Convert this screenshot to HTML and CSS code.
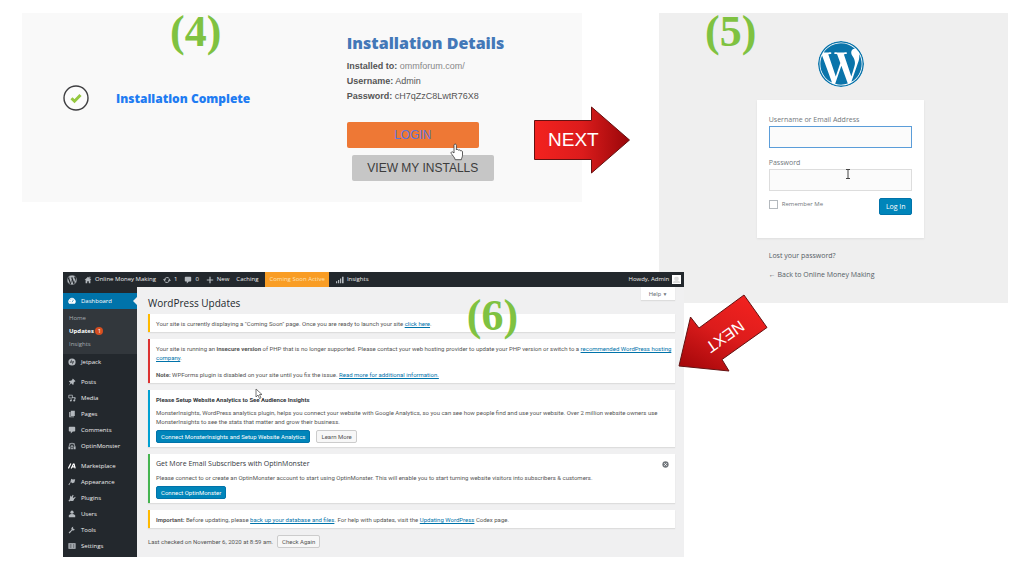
FILE: index.html
```html
<!DOCTYPE html>
<html lang="en">
<head>
<meta charset="utf-8">
<title>WordPress installation steps</title>
<link rel="stylesheet" href="styles.css">
</head>
<body>
<svg class="defs" width="0" height="0" aria-hidden="true">
  <symbol id="wp" viewBox="0 0 24 24">
    <circle cx="12" cy="12" r="11.6" fill="none" stroke="currentColor" stroke-width=".8"/>
    <path fill="currentColor" d="M21.469 6.825c.84 1.537 1.318 3.3 1.318 5.175 0 3.979-2.156 7.456-5.363 9.325l3.295-9.527c.615-1.54.82-2.771.82-3.864 0-.405-.026-.78-.07-1.11m-7.981.105c.647-.03 1.232-.105 1.232-.105.582-.075.514-.93-.067-.899 0 0-1.755.135-2.88.135-1.064 0-2.85-.15-2.85-.15-.585-.03-.661.855-.075.885 0 0 .54.061 1.125.09l1.68 4.605-2.37 7.08L5.354 6.9c.649-.03 1.234-.1 1.234-.1.585-.075.516-.93-.065-.896 0 0-1.746.138-2.874.138-.2 0-.438-.008-.69-.015C4.911 3.15 8.235 1.215 12 1.215c2.809 0 5.365 1.072 7.286 2.833-.046-.003-.091-.009-.141-.009-1.06 0-1.812.923-1.812 1.914 0 .89.513 1.643 1.06 2.531.411.72.89 1.643.89 2.977 0 .915-.354 1.994-.821 3.479l-1.075 3.585-3.9-11.61zM12 22.784c-1.059 0-2.081-.153-3.048-.437l3.237-9.406 3.315 9.087c.024.053.05.101.078.149-1.12.393-2.325.609-3.582.609M1.211 12c0-1.564.336-3.05.935-4.39L7.29 21.709C3.694 19.96 1.212 16.271 1.211 12"/>
  </symbol>
  <symbol id="comment" viewBox="0 0 20 20"><path fill="currentColor" d="M4 2h12a2 2 0 0 1 2 2v8a2 2 0 0 1-2 2h-4l-5 5v-5H4a2 2 0 0 1-2-2V4a2 2 0 0 1 2-2z"/></symbol>
</svg>

<main class="slide">
  <div class="top">
    <section class="install">
      <span class="step step-4">(4)</span>
      <div class="done">
        <svg class="tick" viewBox="0 0 26 26"><circle cx="13" cy="13" r="12" fill="#fcfcfc" stroke="#3f3f42" stroke-width="1.4"/><path d="M8.500 13.200l3 3 6-6.200" fill="none" stroke="#95c840" stroke-width="3"/></svg>
        <strong class="done-text">Installation Complete</strong>
      </div>
      <div class="details">
        <h2 class="details-title">Installation Details</h2>
        <p class="detail"><b>Installed to:</b> <span class="domain">ommforum.com/</span></p>
        <p class="detail"><b>Username:</b> Admin</p>
        <p class="detail"><b>Password:</b> cH7qZzC8LwtR76X8</p>
        <div class="actions">
          <button class="big login-btn" type="button">LOGIN
            <svg class="hand" viewBox="0 0 14 18"><path d="M4 10V2.4C4 .6 6.4.6 6.4 2.4V7c.3-.9 2-.8 2.2.3.5-.7 1.9-.4 2 .6.6-.5 1.9-.2 1.9 1.1v3.2c0 2-1 2.8-1.2 4.5H5.2C4.8 14.500 2.500 12.500 1.200 10.400.500 9.100 2.200 8.300 3 9.200z" fill="#fff" stroke="#333" stroke-width=".8"/></svg>
          </button>
          <button class="big view-btn" type="button">VIEW MY INSTALLS</button>
        </div>
      </div>
    </section>

    <svg class="next" viewBox="0 0 96 68">
      <defs><linearGradient id="red" x1="0" y1="0" x2="1" y2="0"><stop offset="0" stop-color="#f3221f"/><stop offset=".5" stop-color="#dc1c1c"/><stop offset="1" stop-color="#980609"/></linearGradient></defs>
      <path d="M.5 14.500H57.500V1L95.500 34 57.500 67V53.500H.5z" fill="url(#red)" stroke="#641212"/>
      <text x="14" y="40" class="next-text next-text-large">NEXT</text>
    </svg>

    <section class="login">
      <span class="step step-5">(5)</span>
      <div class="login-col">
        <svg class="logo"><use href="#wp"/></svg>
        <form class="card">
          <label class="lbl" for="user">Username or Email Address</label>
          <input class="field focused" id="user" type="text">
          <label class="lbl" for="pass">Password</label>
          <div class="field-wrap">
            <input class="field" id="pass" type="password">
            <svg class="ibeam" viewBox="0 0 6 10"><path d="M1 .5h4M1 9.500h4M3 .5v9" stroke="#444" fill="none"/></svg>
          </div>
          <div class="submit">
            <label class="remember"><input class="box" type="checkbox">Remember Me</label>
            <button class="wpbtn primary log-in" type="button">Log In</button>
          </div>
        </form>
        <a class="below" href="#">Lost your password?</a>
        <a class="below" href="#">← Back to Online Money Making</a>
      </div>
    </section>
  </div>

  <section class="admin">
    <header class="bar">
      <svg class="ic ic-wp"><use href="#wp"/></svg>
      <span class="bar-item"><svg class="ic" viewBox="0 0 20 20"><path fill="currentColor" d="M10 2l8.500 8H16v8h-4v-5H8v5H4v-8H1.500zM13 2h3v5l-3-3z"/></svg>Online Money Making</span>
      <span class="bar-item"><svg class="ic" viewBox="0 0 20 20"><g fill="none" stroke="currentColor" stroke-width="2.500"><path d="M4 9a6.500 6.500 0 0 1 12-2M16 11a6.500 6.500 0 0 1-12 2"/></g><path fill="currentColor" d="M0 8h8l-4 5zM12 12h8l-4-5z"/></svg>1</span>
      <span class="bar-item"><svg class="ic"><use href="#comment"/></svg>0</span>
      <span class="bar-item"><svg class="ic" viewBox="0 0 20 20"><path d="M10 2v16M2 10h16" stroke="currentColor" stroke-width="3"/></svg>New</span>
      <span class="bar-item">Caching</span>
      <span class="soon">Coming Soon Active</span>
      <span class="bar-item"><svg class="ic" viewBox="0 0 20 20"><path fill="currentColor" d="M0 13h3v5H0zM5 10h3v8H5zM10 6h3v12h-3zM15 2h4v16h-4z"/></svg>Insights</span>
      <span class="howdy">Howdy, Admin <svg class="avatar" viewBox="0 0 10 10"><path fill="#fff" d="M0 0h10v10H0z"/><path fill="#ddd" d="M5 2a2 2 0 0 1 1 4q3 0 3 3H1q0-3 3-3a2 2 0 0 1 1-4z"/></svg></span>
    </header>

    <div class="work">
      <nav class="side">
        <a class="nav current" href="#"><svg class="ic" viewBox="0 0 20 20"><path fill="currentColor" d="M3 17a9 9 0 1 1 14 0z"/><path d="M10 13l4-6M4 11h2M6 6l1 1M10 4v2" stroke="#0073aa" stroke-width="1.600"/></svg>Dashboard</a>
        <div class="sub">
          <a class="sub-item" href="#">Home</a>
          <a class="sub-item on" href="#">Updates <span class="count">1</span></a>
          <a class="sub-item" href="#">Insights</a>
        </div>
        <a class="nav" href="#"><svg class="ic" viewBox="0 0 20 20"><circle cx="10" cy="10" r="9" fill="currentColor"/><path fill="#23282d" d="M9 3v9H5zM11 17V8h4z"/></svg>Jetpack</a>
        <a class="nav group" href="#"><svg class="ic" viewBox="0 0 20 20"><path fill="currentColor" d="M12 1l7 7-2 1-3 3v4l-2 1-4-4-6 6 4-7-4-4 2-1h4l3-3z"/></svg>Posts</a>
        <a class="nav" href="#"><svg class="ic" viewBox="0 0 20 20"><path fill="none" stroke="currentColor" stroke-width="2" d="M2 3h9v7H2zM10 9h8v3M17 9v7"/><circle cx="15.500" cy="16.500" r="2.500" fill="currentColor"/><path fill="none" stroke="currentColor" stroke-width="2" d="M8 12v5"/><circle cx="7" cy="16.500" r="2.300" fill="currentColor"/></svg>Media</a>
        <a class="nav" href="#"><svg class="ic" viewBox="0 0 20 20"><path fill="currentColor" d="M7 2h10v13H7zM3 5h3v11h9v2H3z"/></svg>Pages</a>
        <a class="nav" href="#"><svg class="ic"><use href="#comment"/></svg>Comments</a>
        <a class="nav" href="#"><svg class="ic" viewBox="0 0 20 20"><path fill="none" stroke="currentColor" stroke-width="2" d="M3 10a7 7 0 0 1 14 0v2M4 3l3 3M16 3l-3 3"/><path fill="currentColor" d="M1 11h5v7H1zM14 11h5v7h-5zM7 9h6v3H7zM8 14h4v4H8z"/></svg>OptinMonster</a>
        <a class="nav group" href="#"><svg class="ic" viewBox="0 0 20 20"><path stroke="#fff" stroke-width="3" fill="none" d="M1 16l6-12M8 16l6-12M15 4l3 12M11 12h6"/></svg>Marketplace</a>
        <a class="nav" href="#"><svg class="ic" viewBox="0 0 20 20"><path fill="currentColor" d="M8 2l4 2 6-1-2 8-5 2-4-3-4 8-2-2 5-6z"/></svg>Appearance</a>
        <a class="nav" href="#"><svg class="ic" viewBox="0 0 20 20"><path fill="currentColor" d="M6 4l3 3 3-5 2 1-2 5 2 2 4-3 1 2-4 4c0 4-5 6-8 4l-4 2-2-2 3-3z"/></svg>Plugins</a>
        <a class="nav" href="#"><svg class="ic" viewBox="0 0 20 20"><circle cx="10" cy="5.500" r="4" fill="currentColor"/><path fill="currentColor" d="M2 18v-5q3-3 8-3t8 3v5z"/></svg>Users</a>
        <a class="nav" href="#"><svg class="ic" viewBox="0 0 20 20"><path fill="currentColor" d="M17 7.500a5 5 0 0 1-6.500 3.500L4 18.500 1.500 16 9 9.500A5 5 0 0 1 13.500 2L12 5l3 3z"/></svg>Tools</a>
        <a class="nav" href="#"><svg class="ic" viewBox="0 0 20 20"><path fill="currentColor" d="M1 3h18v14H1z"/><path stroke="#23282d" stroke-width="1.500" d="M4 7h5M4 10h5M4 13h5M12 7h4M12 10h4M12 13h4"/></svg>Settings</a>
      </nav>

      <div class="content">
        <div class="head">
          <h1 class="title">WordPress Updates</h1>
          <button class="help" type="button">Help <span class="caret">▼</span></button>
        </div>
        <div class="notice yellow"><p>Your site is currently displaying a "Coming Soon" page. Once you are ready to launch your site <a href="#">click here</a>.</p></div>
        <div class="notice red">
          <p>Your site is running an <b>insecure version</b> of PHP that is no longer supported. Please contact your web hosting provider to update your PHP version or switch to a <a href="#">recommended WordPress hosting company</a>.</p>
          <p><b>Note:</b> WPForms plugin is disabled on your site until you fix the issue. <a href="#">Read more for additional information.</a></p>
        </div>
        <div class="notice blue">
          <h3 class="small-head">Please Setup Website Analytics to See Audience Insights</h3>
          <p>MonsterInsights, WordPress analytics plugin, helps you connect your website with Google Analytics, so you can see how people find and use your website. Over 2 million website owners use MonsterInsights to see the stats that matter and grow their business.</p>
          <div class="btns"><button class="wpbtn primary" type="button">Connect MonsterInsights and Setup Website Analytics</button><button class="wpbtn" type="button">Learn More</button></div>
          <svg class="pointer" viewBox="0 0 8 12"><path d="M1 1v8l2-2 1.500 3.500 1.500-.7L4.500 6.500H7z" fill="#fff" stroke="#555" stroke-width=".8"/></svg>
        </div>
        <div class="notice green">
          <div class="row"><h2 class="mid-head">Get More Email Subscribers with OptinMonster</h2>
          <button class="close" type="button" aria-label="Dismiss"><svg class="close-ic" viewBox="0 0 20 20"><circle cx="10" cy="10" r="9" fill="#72777c"/><path d="M6.500 6.500l7 7M13.500 6.500l-7 7" stroke="#fff" stroke-width="2.500"/></svg></button></div>
          <p>Please connect to or create an OptinMonster account to start using OptinMonster. This will enable you to start turning website visitors into subscribers &amp; customers.</p>
          <div class="btns"><button class="wpbtn primary" type="button">Connect OptinMonster</button></div>
        </div>
        <div class="notice yellow"><p><b>Important:</b> Before updating, please <a href="#">back up your database and files</a>. For help with updates, visit the <a href="#">Updating WordPress</a> Codex page.</p></div>
        <div class="checked"><span>Last checked on November 6, 2020 at 8:59 am.</span><button class="wpbtn" type="button">Check Again</button></div>
      </div>
    </div>
    <span class="step step-6">(6)</span>
    <svg class="next-back" viewBox="0 0 90 78">
      <defs><linearGradient id="red2" x1=".8" y1="0" x2=".2" y2="1"><stop offset="0" stop-color="#f3221f"/><stop offset=".5" stop-color="#dc1c1c"/><stop offset="1" stop-color="#a8080b"/></linearGradient></defs>
      <path d="M66 1L89 33.500 44 65.500 51 77 1 72 12.500 23 21 34z" fill="url(#red2)" stroke="#641212"/>
      <text class="next-text" text-anchor="middle" transform="translate(44 38) rotate(145)">NEXT</text>
    </svg>
  </section>
</main>
</body>
</html>
```
FILE: styles.css
```css
* { box-sizing: border-box; }
body { margin: 0; background: #fff; font-family: "Open Sans", "Noto Sans", sans-serif; color: #444; }
h1, h2, h3, p { margin: 0; }
button, input { font-family: inherit; margin: 0; }
button { padding: 0; border: 0; }
.defs { position: absolute; }

.slide { padding: 13px 16px 19px 22px; overflow: hidden; }
.top { display: grid; grid-template-columns: 560fr 77px 349fr; align-items: start; }
.step { position: absolute; z-index: 3; font: bold 44px/44px "Liberation Serif", serif; color: #7fc241; }
.step-4 { left: 148px; top: -3px; }
.step-5 { left: 46px; top: -3px; }
.step-6 { left: 65%; top: 22px; }

/* Step 4: installer result */
.install { position: relative; display: grid; grid-template-columns: 58% 1fr; min-height: 189px; padding-top: 20px; background: #f9f9f9; }
.done { display: flex; align-items: center; gap: 27px; height: 130px; padding-left: 41px; }
.tick { width: 26px; height: 26px; }
.done-text { font-size: 12px; font-weight: 800; color: #1f7cf2; }
.details { font-family: "Liberation Sans", Arial, sans-serif; }
.details-title { margin-bottom: 6px; font: 800 16px/20px "Open Sans", sans-serif; color: #4378b8; }
.detail { font-size: 9px; line-height: 15px; color: #555; }
.domain { color: #888; }
.actions { display: flex; flex-direction: column; gap: 7px; margin-top: 18px; }
.big { position: relative; height: 26px; font-size: 12px; border-radius: 2px; }
.login-btn { width: 132px; background: #ee7835; color: #5c74d8; }
.view-btn { width: 142px; margin-left: 5px; background: #c6c6c6; color: #3c3c3c; }
.hand { position: absolute; right: 15px; top: 21px; width: 14px; height: 18px; z-index: 2; }

.next { width: 96px; height: 68px; margin: 93px 0 0 -48px; position: relative; z-index: 2; }
.next-text { font: 16px "Liberation Sans", Arial, sans-serif; fill: #fff; }
.next-text-large { font-size: 19px; }

/* Step 5: login form */
.login { position: relative; min-height: 290px; padding: 28px 0 20px 14px; background: #efefef; }
.login-col { width: 50%; margin: 0 auto; display: flex; flex-direction: column; font-size: 7px; line-height: 10px; color: #72777c; }
.logo { width: 46px; height: 46px; margin: 0 auto 13px; color: #0a74aa; background: #fff; border-radius: 50%; }
.card { display: flex; flex-direction: column; padding: 15px 12px 23px; background: #fff; box-shadow: 0 1px 2px #ddd; }
.field { width: 100%; height: 22px; border: 1px solid #ddd; background: #fbfbfb; padding: 0 4px; }
.focused { border-color: #5b9dd9; margin-bottom: 10px; }
.lbl { margin-bottom: 1px; }
.field-wrap { position: relative; }
.ibeam { position: absolute; left: 53%; top: 0; width: 6px; height: 10px; }
.submit { display: flex; justify-content: space-between; align-items: flex-start; margin-top: 7px; }
.remember { display: flex; align-items: center; gap: 4px; padding-top: 1px; font-size: 6px; }
.box { appearance: none; width: 9px; height: 9px; border: 1px solid #b4b9be; background: #fff; }
.below { margin: 13px 0 0 12px; color: #555d66; text-decoration: none; }
.below + .below { margin-top: 9px; }

.wpbtn { height: 13px; padding: 0 4px; font-size: 6px; line-height: 11px; border: 1px solid #ccc; border-radius: 2px; background: #f7f7f7; color: #555; }
.primary { background: #0085ba; border-color: #0073aa; color: #fff; }
.log-in { width: 33px; height: 17px; font-size: 7px; }

/* Step 6: dashboard */
.admin { position: relative; z-index: 1; width: 63%; margin: -31px 0 0 41px; background: #f0f0f1; font-size: 6px; line-height: 9px; }
.bar { display: flex; align-items: center; gap: 7px; height: 15px; padding: 0 3px 0 4px; background: #23282d; color: #eee; white-space: nowrap; }
.bar-item { display: flex; align-items: center; gap: 3px; }
.ic { width: 8px; height: 8px; color: #b4b9be; flex: none; }
.ic-wp { width: 10px; height: 10px; }
.soon { padding: 0 4px; line-height: 15px; background: #f99d25; color: #fde3bb; }
.howdy { display: flex; align-items: center; gap: 3px; margin-left: auto; }
.avatar { width: 9px; height: 9px; }
.work { display: grid; grid-template-columns: 74px 1fr; }
.side { padding: 6px 0 3px; background: #23282d; }
.nav { position: relative; display: flex; align-items: center; gap: 5px; height: 16px; padding-left: 5px; color: #eee; text-decoration: none; }
.current { background: #0073aa; color: #fff; }
.current .ic { color: #fff; }
.current::after { content: ""; position: absolute; right: 0; top: 4px; border: 4px solid transparent; border-left: 0; border-right-color: #f0f0f1; }
.group { margin-top: 4px; }
.sub { display: flex; flex-direction: column; gap: 4px; padding: 5px 6px; background: #32373c; }
.sub-item { color: #a5abb1; text-decoration: none; }
.on { color: #fff; font-weight: bold; }
.count { display: inline-block; width: 8px; height: 8px; border-radius: 50%; background: #d54e21; font-weight: normal; line-height: 8px; text-align: center; }

.content { padding: 0 9px 0 11px; font-family: Roboto, "Open Sans", sans-serif; color: #555; }
.head { display: flex; justify-content: space-between; align-items: flex-start; height: 27px; }
.title { padding-top: 9px; font: 10px/15px "Open Sans", sans-serif; color: #23282d; }
.help { width: 34px; height: 13px; background: #fff; color: #72777c; font-size: 6px; box-shadow: 0 1px 1px #ddd; }
.caret { font-size: 5px; }
.notice { position: relative; margin-bottom: 7px; padding: 5px 0 4px 6px; border-left: 2px solid #ffb900; background: #fff; box-shadow: 0 1px 1px #ddd; }
.notice a { color: #0073aa; }
.notice p + p { margin-top: 8px; }
.red { border-color: #dc3232; }
.blue { border-color: #00a0d2; }
.green { border-color: #46b450; }
.small-head { margin-bottom: 4px; font-size: 6px; line-height: 9px; color: #32373c; }
.btns { display: flex; gap: 6px; margin-top: 4px; }
.pointer { position: absolute; left: 20%; top: -2px; width: 8px; height: 12px; }
.row { display: flex; justify-content: space-between; margin-bottom: 4px; padding-right: 6px; }
.mid-head { font: 7px/10px "Open Sans", sans-serif; color: #32373c; }
.close { width: 7px; height: 10px; background: none; }
.close-ic { display: block; width: 7px; height: 7px; }
.checked { display: flex; align-items: center; gap: 4px; }

.next-back { position: absolute; right: -84px; top: 22px; width: 90px; height: 78px; }
```
